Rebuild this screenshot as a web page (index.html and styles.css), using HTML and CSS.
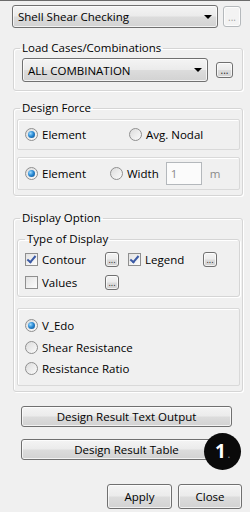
FILE: index.html
```html
<!DOCTYPE html>
<html lang="en">
<head>
  <meta charset="UTF-8" />
  <meta name="viewport" content="width=device-width, initial-scale=1.0"/>
  <title>Shell Shear Checking</title>
  <link rel="stylesheet" href="styles.css">
</head>
<body>
  <div class="panel">
    <div class="top-row">
      <div class="combo main-combo"><span>Shell Shear Checking</span><i class="arrow"></i></div>
      <button class="dots off">...</button>
    </div>

    <fieldset class="group load-group">
      <legend>Load Cases/Combinations</legend>
      <div class="combo-row">
        <div class="combo load-combo"><span>ALL COMBINATION</span><i class="arrow"></i></div>
        <button class="dots">...</button>
      </div>
    </fieldset>

    <fieldset class="group force-group">
      <legend>Design Force</legend>
      <div class="box force-box">
        <label class="opt first"><span class="radio on"></span>Element</label>
        <label class="opt"><span class="radio"></span>Avg. Nodal</label>
      </div>
      <div class="box width-box">
        <label class="opt first-sm"><span class="radio on"></span>Element</label>
        <label class="opt"><span class="radio"></span>Width</label>
        <input class="num" type="text" value="1" disabled />
        <span class="unit">m</span>
      </div>
    </fieldset>

    <fieldset class="group display-group">
      <legend>Display Option</legend>
      <fieldset class="group type-group">
        <legend>Type of Display</legend>
        <div class="check-grid">
          <label class="opt"><span class="check on"></span>Contour</label>
          <button class="dots small">...</button>
          <label class="opt"><span class="check on"></span>Legend</label>
          <button class="dots small">...</button>
          <label class="opt"><span class="check"></span>Values</label>
          <button class="dots small">...</button>
        </div>
      </fieldset>
      <div class="box result-box">
        <label class="opt"><span class="radio on"></span>V_Edo</label>
        <label class="opt"><span class="radio"></span>Shear Resistance</label>
        <label class="opt"><span class="radio"></span>Resistance Ratio</label>
      </div>
    </fieldset>

    <div class="actions">
      <button class="btn long">Design Result Text Output</button>
      <div class="badge-wrap">
        <button class="btn long">Design Result Table</button>
        <span class="badge">1<small>.</small></span>
      </div>
    </div>

    <div class="footer">
      <button class="btn apply">Apply</button>
      <button class="btn close">Close</button>
    </div>
  </div>
</body>
</html>
```

FILE: styles.css
```css
body {
  margin: 0;
  background: #f0f0f0;
  font-family: "Open Sans", "Noto Sans", sans-serif;
  font-size: 11.5px;
  color: #000;
}

.panel {
  width: 250px;
  height: 512px;
  box-sizing: border-box;
  padding: 4px 0 0 12px;
  border-top: 1px solid #6b6b6b;
  overflow: hidden;
}

/* buttons and combos share the win7 gradient look */
.combo,
.btn,
.dots {
  box-sizing: border-box;
  border: 1px solid #707070;
  border-radius: 3px;
  background: linear-gradient(#f4f4f4 0%, #ebebeb 48%, #dcdcdc 52%, #d2d2d2 100%);
  box-shadow: inset 0 0 0 1px rgba(255,255,255,0.7);
  font-family: inherit;
  font-size: inherit;
  color: #000;
}

.top-row {
  display: flex;
  align-items: center;
  gap: 5px;
  height: 23px;
}

.combo {
  display: flex;
  align-items: center;
  justify-content: space-between;
  padding: 0 5px 0 5px;
}

.main-combo {
  width: 206px;
  height: 23px;
}

.arrow {
  width: 0;
  height: 0;
  border-left: 4px solid transparent;
  border-right: 4px solid transparent;
  border-top: 4px solid #000;
}

.dots {
  width: 18px;
  height: 21px;
  padding: 0;
  font-size: 10px;
  line-height: 10px;
  color: #222;
}

.dots.off {
  border-color: #b5b9bc;
  background: #f3f3f3;
  color: #a0a0a0;
}

.group {
  box-sizing: border-box;
  width: 230px;
  margin: 0 0 0 1px;
  padding: 4px 2px 5px 3px;
  border: 1px solid #d5d5d5;
  border-radius: 3px;
  box-shadow: inset 1px 1px 0 #fff, 1px 1px 0 #fff;
}

.group legend {
  padding: 0 2px;
  margin-left: 3px;
  line-height: 14px;
}

.load-group {
  margin-top: 13px;
  padding-top: 3px;
  padding-bottom: 8px;
}

.combo-row {
  display: flex;
  align-items: center;
  gap: 8px;
  padding-left: 5px;
}

.load-combo {
  width: 186px;
  height: 24px;
}

.combo-row .dots {
  width: 17px;
  height: 16px;
}

.force-group {
  margin-top: 10px;
  padding-bottom: 5px;
}

.box {
  box-sizing: border-box;
  border: 1px solid #d9d9d9;
  border-radius: 2px;
  box-shadow: inset 1px 1px 0 #fff;
  display: flex;
  align-items: center;
  padding-left: 7px;
}

.force-box {
  height: 31px;
}

.width-box {
  height: 33px;
  margin-top: 7px;
}

.opt {
  display: flex;
  align-items: center;
  gap: 4px;
  white-space: nowrap;
}

.first {
  width: 104px;
}

.first-sm {
  width: 85px;
}

.radio,
.check {
  box-sizing: border-box;
  width: 13px;
  height: 13px;
  border: 1px solid #8f8f8f;
  background: linear-gradient(135deg, #dcdcdc, #fbfbfb);
  flex: none;
}

.radio {
  border-radius: 50%;
  position: relative;
}

.radio.on::after {
  content: "";
  position: absolute;
  left: 2px;
  top: 2px;
  width: 7px;
  height: 7px;
  border-radius: 50%;
  background: radial-gradient(circle at 35% 35%, #9fdcff 0%, #2a8ad4 45%, #0c4a86 100%);
}

.check {
  background: linear-gradient(135deg, #e2e2e2, #fdfdfd);
  position: relative;
}

.check.on::after {
  content: "";
  position: absolute;
  left: 3px;
  top: 0px;
  width: 3px;
  height: 7px;
  border: solid #3b5aa5;
  border-width: 0 2px 2px 0;
  transform: rotate(40deg);
}

.num {
  box-sizing: border-box;
  width: 36px;
  height: 23px;
  margin-left: 7px;
  padding: 0 4px;
  border: 1px solid #b4b8bc;
  background: #fbfbfb;
  font-family: inherit;
  font-size: inherit;
  color: #8a8a8a;
}

.unit {
  margin-left: 8px;
  color: #8a8a8a;
}

.display-group {
  margin-top: 15px;
  padding-bottom: 5px;
}

.type-group {
  width: 223px;
  margin: 3px 0 0 0;
  padding: 0 2px 2px 7px;
}

.type-group legend {
  margin-left: 0;
}

.check-grid {
  display: grid;
  grid-template-columns: 80px 23px 75px 15px;
  grid-auto-rows: 23px;
  align-items: center;
  padding-top: 2px;
}

.dots.small {
  width: 14px;
  height: 15px;
  font-size: 9px;
}

.result-box {
  flex-direction: column;
  align-items: flex-start;
  justify-content: center;
  height: 78px;
  margin-top: 11px;
}

.result-box .opt {
  height: 21.5px;
}

.actions {
  display: flex;
  flex-direction: column;
  gap: 12px;
  margin: 14px 0 0 9px;
}

.btn {
  height: 21px;
  padding: 0;
}

.long {
  width: 211px;
}

.badge-wrap {
  position: relative;
  width: 211px;
  height: 21px;
}

.badge {
  position: absolute;
  left: 183px;
  top: -6px;
  width: 37px;
  height: 37px;
  border-radius: 50%;
  background: #0a0a0a;
  color: #fff;
  font-weight: bold;
  font-size: 19px;
  line-height: 37px;
  text-align: center;
}

.badge small {
  font-size: 8px;
  color: #888;
  margin-left: 2px;
}

.footer {
  display: flex;
  gap: 6px;
  margin: 24px 0 0 95px;
}

.apply {
  width: 65px;
  height: 25px;
}

.close {
  width: 64px;
  height: 25px;
}
```
